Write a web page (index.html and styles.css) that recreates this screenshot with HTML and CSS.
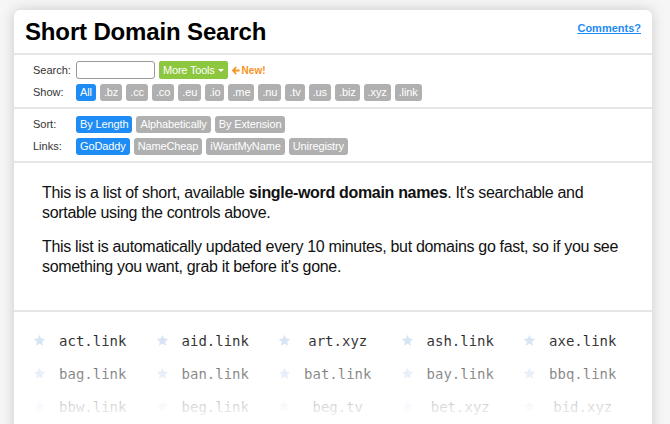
FILE: index.html
```html
<!DOCTYPE html>
<html lang="en">
<head>
  <meta charset="UTF-8">
  <meta name="viewport" content="width=device-width, initial-scale=1.0">
  <title>Short Domain Search</title>
  <link rel="stylesheet" href="styles.css">
</head>
<body>
  <div class="card">
    <div class="header">
      <h1>Short Domain Search</h1>
      <a href="#" class="comments">Comments?</a>
    </div>

    <!-- Search / filter -->
    <div class="controls">
      <div class="row">
        <span class="label">Search:</span>
        <input type="text" class="search-input">
        <button class="tools-btn">More Tools <span class="caret"></span></button>
        <span class="new-tag">
          <svg width="8" height="9" viewBox="0 0 8 9"><path d="M4.2 1 L1 4.5 L4.2 8 M1 4.5 H7.5" fill="none" stroke="#f7931e" stroke-width="1.8"/></svg>
          New!
        </span>
      </div>
      <div class="row">
        <span class="label">Show:</span>
        <div class="pills">
          <span class="pill active">All</span>
          <span class="pill">.bz</span>
          <span class="pill">.cc</span>
          <span class="pill">.co</span>
          <span class="pill">.eu</span>
          <span class="pill">.io</span>
          <span class="pill">.me</span>
          <span class="pill">.nu</span>
          <span class="pill">.tv</span>
          <span class="pill">.us</span>
          <span class="pill">.biz</span>
          <span class="pill">.xyz</span>
          <span class="pill">.link</span>
        </div>
      </div>
    </div>

    <!-- Sort / registrar -->
    <div class="controls">
      <div class="row">
        <span class="label">Sort:</span>
        <div class="pills">
          <span class="pill active">By Length</span>
          <span class="pill">Alphabetically</span>
          <span class="pill">By Extension</span>
        </div>
      </div>
      <div class="row">
        <span class="label">Links:</span>
        <div class="pills">
          <span class="pill active">GoDaddy</span>
          <span class="pill">NameCheap</span>
          <span class="pill">iWantMyName</span>
          <span class="pill">Uniregistry</span>
        </div>
      </div>
    </div>

    <div class="intro">
      <p>This is a list of short, available <b>single-word domain names</b>. It's searchable and sortable using the controls above.</p>
      <p>This list is automatically updated every 10 minutes, but domains go fast, so if you see something you want, grab it before it's gone.</p>
    </div>

    <!-- Domain list -->
    <div class="domains">
      <div class="domain"><svg class="star" viewBox="0 0 24 24"><path d="M12 1.5l3.1 7 7.6.7-5.8 5 1.8 7.5L12 17.8l-6.7 3.9 1.8-7.5-5.8-5 7.6-.7z"/></svg><span>act.link</span></div>
      <div class="domain"><svg class="star" viewBox="0 0 24 24"><path d="M12 1.5l3.1 7 7.6.7-5.8 5 1.8 7.5L12 17.8l-6.7 3.9 1.8-7.5-5.8-5 7.6-.7z"/></svg><span>aid.link</span></div>
      <div class="domain"><svg class="star" viewBox="0 0 24 24"><path d="M12 1.5l3.1 7 7.6.7-5.8 5 1.8 7.5L12 17.8l-6.7 3.9 1.8-7.5-5.8-5 7.6-.7z"/></svg><span>art.xyz</span></div>
      <div class="domain"><svg class="star" viewBox="0 0 24 24"><path d="M12 1.5l3.1 7 7.6.7-5.8 5 1.8 7.5L12 17.8l-6.7 3.9 1.8-7.5-5.8-5 7.6-.7z"/></svg><span>ash.link</span></div>
      <div class="domain"><svg class="star" viewBox="0 0 24 24"><path d="M12 1.5l3.1 7 7.6.7-5.8 5 1.8 7.5L12 17.8l-6.7 3.9 1.8-7.5-5.8-5 7.6-.7z"/></svg><span>axe.link</span></div>

      <div class="domain"><svg class="star" viewBox="0 0 24 24"><path d="M12 1.5l3.1 7 7.6.7-5.8 5 1.8 7.5L12 17.8l-6.7 3.9 1.8-7.5-5.8-5 7.6-.7z"/></svg><span>bag.link</span></div>
      <div class="domain"><svg class="star" viewBox="0 0 24 24"><path d="M12 1.5l3.1 7 7.6.7-5.8 5 1.8 7.5L12 17.8l-6.7 3.9 1.8-7.5-5.8-5 7.6-.7z"/></svg><span>ban.link</span></div>
      <div class="domain"><svg class="star" viewBox="0 0 24 24"><path d="M12 1.5l3.1 7 7.6.7-5.8 5 1.8 7.5L12 17.8l-6.7 3.9 1.8-7.5-5.8-5 7.6-.7z"/></svg><span>bat.link</span></div>
      <div class="domain"><svg class="star" viewBox="0 0 24 24"><path d="M12 1.5l3.1 7 7.6.7-5.8 5 1.8 7.5L12 17.8l-6.7 3.9 1.8-7.5-5.8-5 7.6-.7z"/></svg><span>bay.link</span></div>
      <div class="domain"><svg class="star" viewBox="0 0 24 24"><path d="M12 1.5l3.1 7 7.6.7-5.8 5 1.8 7.5L12 17.8l-6.7 3.9 1.8-7.5-5.8-5 7.6-.7z"/></svg><span>bbq.link</span></div>

      <div class="domain"><svg class="star" viewBox="0 0 24 24"><path d="M12 1.5l3.1 7 7.6.7-5.8 5 1.8 7.5L12 17.8l-6.7 3.9 1.8-7.5-5.8-5 7.6-.7z"/></svg><span>bbw.link</span></div>
      <div class="domain"><svg class="star" viewBox="0 0 24 24"><path d="M12 1.5l3.1 7 7.6.7-5.8 5 1.8 7.5L12 17.8l-6.7 3.9 1.8-7.5-5.8-5 7.6-.7z"/></svg><span>beg.link</span></div>
      <div class="domain"><svg class="star" viewBox="0 0 24 24"><path d="M12 1.5l3.1 7 7.6.7-5.8 5 1.8 7.5L12 17.8l-6.7 3.9 1.8-7.5-5.8-5 7.6-.7z"/></svg><span>beg.tv</span></div>
      <div class="domain"><svg class="star" viewBox="0 0 24 24"><path d="M12 1.5l3.1 7 7.6.7-5.8 5 1.8 7.5L12 17.8l-6.7 3.9 1.8-7.5-5.8-5 7.6-.7z"/></svg><span>bet.xyz</span></div>
      <div class="domain"><svg class="star" viewBox="0 0 24 24"><path d="M12 1.5l3.1 7 7.6.7-5.8 5 1.8 7.5L12 17.8l-6.7 3.9 1.8-7.5-5.8-5 7.6-.7z"/></svg><span>bid.xyz</span></div>

      <div class="fade"></div>
    </div>
  </div>
</body>
</html>
```

FILE: styles.css
```css
* {
  margin: 0;
  padding: 0;
  box-sizing: border-box;
}

html, body {
  height: 100%;
  overflow: hidden;
}

body {
  background: #f6f6f6;
  font-family: 'Liberation Sans', Arial, sans-serif;
  color: #111;
  padding: 10px 18px 0 14px;
}

.card {
  background: white;
  border-radius: 6px;
  box-shadow: 0 0 14px rgba(0, 0, 0, 0.18);
  min-height: 600px;
}

.header {
  display: flex;
  justify-content: space-between;
  align-items: flex-start;
  padding: 8px 11px 7px;
  border-bottom: 2px solid #e6e6e6;
}

.header h1 {
  font-size: 24px;
  line-height: 28px;
  font-weight: bold;
  letter-spacing: -0.15px;
  color: #000;
}

.comments {
  margin-top: 4px;
  font-size: 11px;
  line-height: 13px;
  font-weight: bold;
  color: #1e8cf5;
}

.controls {
  padding: 6px 19px 6px;
  border-bottom: 2px solid #e6e6e6;
  display: flex;
  flex-direction: column;
  gap: 4px;
}

.row {
  display: flex;
  align-items: center;
  height: 18px;
}

.label {
  width: 43px;
  font-size: 11px;
  color: #333;
}

.search-input {
  width: 79px;
  height: 18px;
  border: 1px solid #999;
  border-radius: 3px;
  margin-right: 4px;
}

.tools-btn {
  height: 18px;
  padding: 0 4px;
  border: none;
  border-radius: 2px;
  background: #8dc63f;
  color: white;
  font-family: inherit;
  font-size: 11px;
  letter-spacing: -0.2px;
  display: flex;
  align-items: center;
  gap: 3px;
}

.caret {
  width: 0;
  height: 0;
  border-left: 3px solid transparent;
  border-right: 3px solid transparent;
  border-top: 3px solid white;
}

.new-tag {
  margin-left: 4px;
  font-size: 10px;
  font-weight: bold;
  color: #f7931e;
  display: flex;
  align-items: center;
  gap: 2px;
}

.pills {
  display: flex;
  gap: 4px;
}

.pill {
  height: 17px;
  line-height: 17px;
  padding: 0 4px;
  border-radius: 3px;
  background: #b0b0b0;
  color: white;
  font-size: 11px;
  letter-spacing: -0.12px;
}

.pill.active {
  background: #1e8cf5;
}

.intro {
  padding: 20px 28px 34px;
  border-bottom: 2px solid #e6e6e6;
  font-size: 16px;
  line-height: 19.5px;
  letter-spacing: -0.32px;
}

.intro p + p {
  margin-top: 15px;
}

.domains {
  position: relative;
  display: grid;
  grid-template-columns: repeat(5, 122.5px);
  grid-auto-rows: 33px;
  padding: 12px 14px 0;
}

.domain {
  display: grid;
  grid-template-columns: 13px 1fr;
  column-gap: 6px;
  align-items: center;
  padding: 0 17px 0 5px;
}

.star {
  width: 13px;
  height: 13px;
  fill: #d3e2f3;
}

.domain span {
  text-align: center;
  font-family: 'DejaVu Sans Mono', 'Liberation Mono', monospace;
  font-size: 14px;
  color: #1a1a1a;
}

.fade {
  position: absolute;
  inset: 0;
  background: linear-gradient(to bottom, rgba(255, 255, 255, 0) 20px, rgba(255, 255, 255, 0.95) 105px);
}
```
